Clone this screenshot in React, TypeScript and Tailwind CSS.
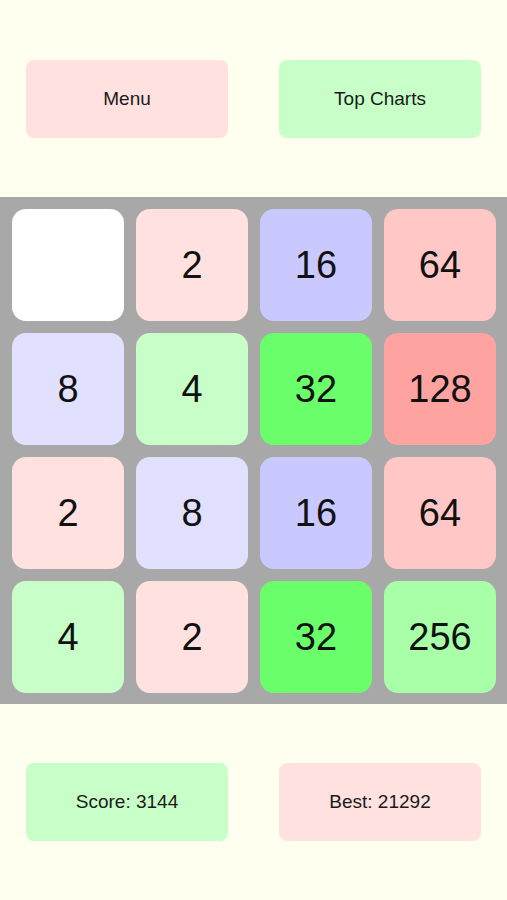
const TILES: { value: number | null; color: string }[] = [
  { value: null, color: 'bg-white' },
  { value: 2, color: 'bg-[#ffe1e0]' },
  { value: 16, color: 'bg-[#c9c8ff]' },
  { value: 64, color: 'bg-[#ffc8c6]' },
  { value: 8, color: 'bg-[#e1e1ff]' },
  { value: 4, color: 'bg-[#c8ffc8]' },
  { value: 32, color: 'bg-[#6aff6a]' },
  { value: 128, color: 'bg-[#ffa3a1]' },
  { value: 2, color: 'bg-[#ffe1e0]' },
  { value: 8, color: 'bg-[#e1e1ff]' },
  { value: 16, color: 'bg-[#c9c8ff]' },
  { value: 64, color: 'bg-[#ffc8c6]' },
  { value: 4, color: 'bg-[#c8ffc8]' },
  { value: 2, color: 'bg-[#ffe1e0]' },
  { value: 32, color: 'bg-[#6aff6a]' },
  { value: 256, color: 'bg-[#a8ffa8]' },
];

function PillButton({ label, color }: { label: string; color: string }) {
  return (
    <button
      type="button"
      className={`flex h-[78px] w-[202px] items-center justify-center rounded-[8px] text-[19px] text-[#1a1a1a] ${color}`}
    >
      {label}
    </button>
  );
}

export default function App() {
  return (
    <div
      className="flex min-h-[900px] w-full flex-col bg-[#fffff0]"
      style={{ fontFamily: '"Liberation Sans", Arial, sans-serif' }}
    >
      <div className="flex justify-between pl-[26px] pr-[26px] pt-[60px]">
        <PillButton label="Menu" color="bg-[#ffe2e0]" />
        <PillButton label="Top Charts" color="bg-[#c8ffc8]" />
      </div>

      <div className="mt-[59px] grid grid-cols-4 gap-3 bg-[#a8a8a8] pb-[11px] pl-3 pr-[11px] pt-3">
        {TILES.map((t, i) => (
          <div
            key={i}
            className={`flex h-[112px] items-center justify-center rounded-[14px] text-[38px] text-[#111] ${t.color}`}
          >
            {t.value}
          </div>
        ))}
      </div>

      <div className="mt-[59px] flex justify-between pl-[26px] pr-[26px]">
        <PillButton label="Score: 3144" color="bg-[#c8ffc8]" />
        <PillButton label="Best: 21292" color="bg-[#ffe2e0]" />
      </div>
    </div>
  );
}
